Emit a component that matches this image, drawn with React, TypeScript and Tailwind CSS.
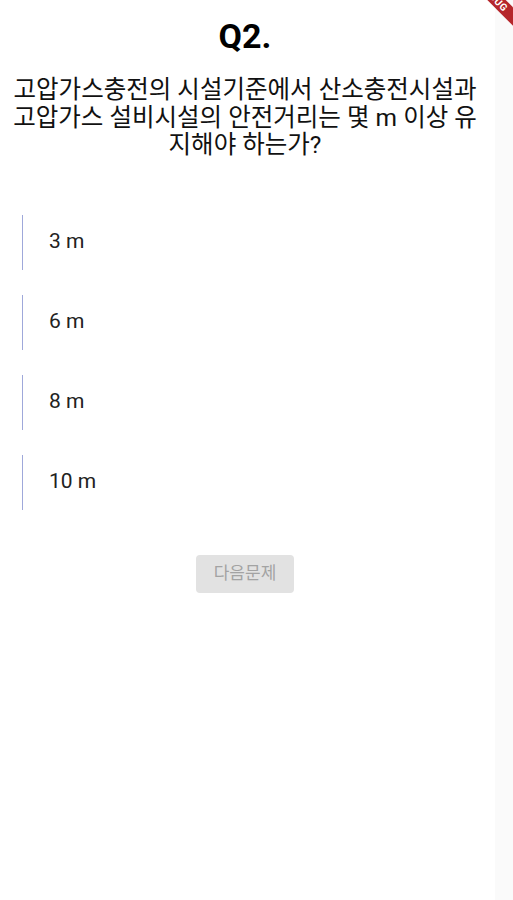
import React from 'react';

const options = ['3 m', '6 m', '8 m', '10 m'];

export default function App() {
  return (
    <div
      className="relative flex min-h-[900px] w-[513px] overflow-hidden bg-white"
      style={{ fontFamily: "Roboto, 'Noto Sans CJK KR', sans-serif" }}
    >
      <main className="flex w-[495px] flex-col pr-[5px]">
        <h1 className="mt-[16px] text-center text-[34px] font-bold leading-[40px] text-black">Q2.</h1>
        <p className="mx-[8px] mt-[20px] text-center text-[24.5px] leading-[27.5px] text-[#111]">
          고압가스충전의 시설기준에서 산소충전시설과 고압가스 설비시설의 안전거리는 몇 m 이상 유지해야 하는가?
        </p>

        <ul className="mt-[56px] flex flex-col gap-[25px] pl-[22px]">
          {options.map((opt) => (
            <li key={opt} className="flex h-[55px] items-center border-l-[1.5px] border-[#9fa8da] pl-[26px] text-[21px] text-[#222]">
              {opt}
            </li>
          ))}
        </ul>

        <div className="mt-[45px] flex justify-center">
          <button className="h-[38px] w-[98px] rounded-[4px] bg-[#e2e2e2] text-[17px] text-[#a3a3a3]">다음문제</button>
        </div>
      </main>
      <aside className="w-[18px] bg-[#fafafa]" />

      {/* debug ribbon */}
      <div className="absolute right-[-26px] top-[-9px] flex h-[13px] w-[90px] rotate-45 items-center justify-center bg-[#b5262b] text-[10px] font-bold tracking-[0.5px] text-white">
        DEBUG
      </div>
    </div>
  );
}
